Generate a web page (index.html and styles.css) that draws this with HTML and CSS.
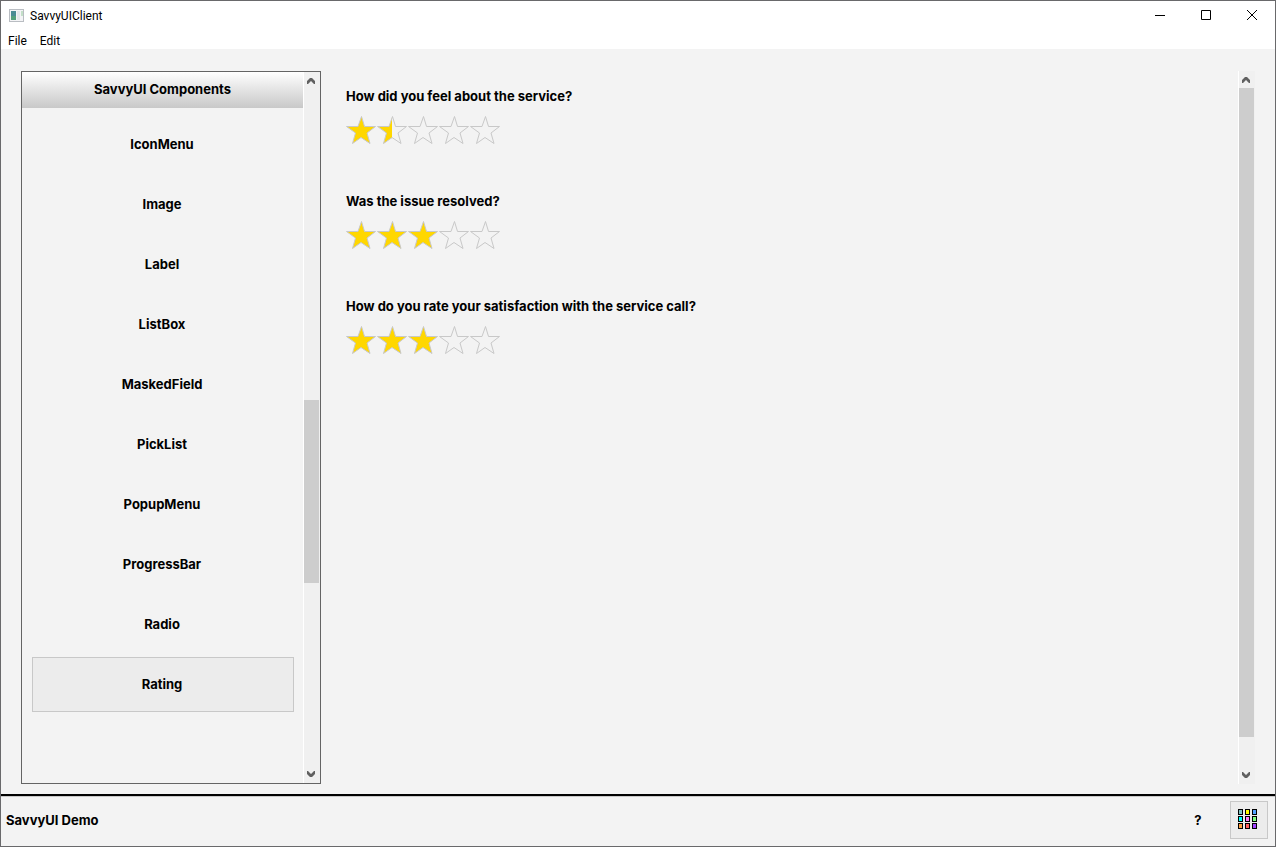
FILE: index.html
```html
<!DOCTYPE html>
<html lang="en">
<head>
  <meta charset="UTF-8" />
  <meta name="viewport" content="width=device-width, initial-scale=1.0"/>
  <title>SavvyUIClient</title>
  <link rel="stylesheet" href="styles.css">
</head>
<body>

  <!-- Shared shapes -->
  <svg class="defs" aria-hidden="true">
    <defs>
      <path id="starShape" d="M15.5 .5L18.5 10.5H29.5L21 17L24 27.5L15 21.5L6.5 27.5L9.5 17L.5 10.5H12Z"/>
      <path id="halfShape" d="M15 2L12 10.5H1L9.5 17L6.5 27.5L15 21.8Z"/>
      <path id="arrowUp" d="M0 4L3 1H5L8 4V7H7L4 4L1 7H0Z"/>
    </defs>
  </svg>

  <header>
    <div class="title-bar">
      <svg class="app-icon" width="15" height="13" viewBox="0 0 15 13" aria-hidden="true">
        <rect x=".5" y=".5" width="14" height="12" fill="#f4f4f6" stroke="#b9bdc2"/>
        <rect x="2" y="2" width="5" height="9" fill="#4b8c94"/>
        <rect x="2" y="7" width="5" height="4" fill="#55a07c"/>
        <rect x="8" y="2" width="3" height="9" fill="#e5e7ea"/>
        <rect x="12" y="2" width="2" height="5" fill="#c3dfc8"/>
      </svg>
      <h1>SavvyUIClient</h1>
      <div class="window-buttons">
        <button type="button" aria-label="Minimize">
          <svg width="10" height="11" viewBox="0 0 10 11"><path d="M0 5.5H10" stroke="#000"/></svg>
        </button>
        <button type="button" aria-label="Maximize">
          <svg width="10" height="11" viewBox="0 0 10 11"><path d="M.5 .5H9.5V9.5H.5Z" fill="none" stroke="#000"/></svg>
        </button>
        <button type="button" aria-label="Close">
          <svg width="10" height="11" viewBox="0 0 10 11"><path d="M0 0L10 10M10 0L0 10" stroke="#000"/></svg>
        </button>
      </div>
    </div>
    <nav class="menu-bar">
      <button type="button">File</button>
      <button type="button">Edit</button>
    </nav>
  </header>

  <main>
    <!-- Component list -->
    <aside class="panel">
      <div class="panel-content">
        <h2>SavvyUI Components</h2>
        <div class="component-list">
          <button type="button">IconMenu</button>
          <button type="button">Image</button>
          <button type="button">Label</button>
          <button type="button">ListBox</button>
          <button type="button">MaskedField</button>
          <button type="button">PickList</button>
          <button type="button">PopupMenu</button>
          <button type="button">ProgressBar</button>
          <button type="button">Radio</button>
          <button type="button" class="selected">Rating</button>
        </div>
      </div>
      <div class="scrollbar list-scroll">
        <button type="button" aria-label="Scroll list up"><svg width="8" height="7"><use href="#arrowUp"/></svg></button>
        <div class="track"><div class="thumb"></div></div>
        <button type="button" class="down" aria-label="Scroll list down"><svg width="8" height="7"><use href="#arrowUp"/></svg></button>
      </div>
    </aside>

    <!-- Rating questions -->
    <section class="ratings">
      <div class="question" role="group" aria-labelledby="q1">
        <h3 id="q1">How did you feel about the service?</h3>
        <div class="stars" data-value="1.5"></div>
      </div>
      <div class="question" role="group" aria-labelledby="q2">
        <h3 id="q2">Was the issue resolved?</h3>
        <div class="stars" data-value="3"></div>
      </div>
      <div class="question" role="group" aria-labelledby="q3">
        <h3 id="q3">How do you rate your satisfaction with the service call?</h3>
        <div class="stars" data-value="3"></div>
      </div>
    </section>

    <div class="scrollbar page-scroll">
      <button type="button" aria-label="Scroll page up"><svg width="8" height="7"><use href="#arrowUp"/></svg></button>
      <div class="track"><div class="thumb"></div></div>
      <button type="button" class="down" aria-label="Scroll page down"><svg width="8" height="7"><use href="#arrowUp"/></svg></button>
    </div>
  </main>

  <footer>
    <span>SavvyUI Demo</span>
    <button type="button" class="help">?</button>
    <button type="button" class="palette" aria-label="Themes">
      <svg width="20" height="20" viewBox="0 0 20 20" stroke="#000">
        <rect x=".5" y=".5" width="4" height="5" fill="#80c0c0"/>
        <rect x="7.5" y=".5" width="4" height="5" fill="#ffff00"/>
        <rect x="14.5" y=".5" width="4" height="5" fill="#50a0ff"/>
        <rect x=".5" y="7.5" width="4" height="5" fill="#00ffff"/>
        <rect x="7.5" y="7.5" width="4" height="5" fill="#ff80ff"/>
        <rect x="14.5" y="7.5" width="4" height="5" fill="#80ff80"/>
        <rect x=".5" y="14.5" width="4" height="5" fill="#ffa040"/>
        <rect x="7.5" y="14.5" width="4" height="5" fill="#ff6060"/>
        <rect x="14.5" y="14.5" width="4" height="5" fill="#a040ff"/>
      </svg>
    </button>
  </footer>

  <script>
    function renderStars(box) {
      const value = parseFloat(box.dataset.value);
      box.innerHTML = "";

      for (let i = 1; i <= 5; i++) {
        let fill = "";
        if (value >= i) {
          fill = `<use href="#starShape" class="fill"/>`;
        } else if (value >= i - 0.5) {
          fill = `<use href="#halfShape" class="fill"/>`;
        }

        const star = document.createElement("button");
        star.type = "button";
        star.setAttribute("aria-label", i + " of 5 stars");
        star.innerHTML = `<svg width="31" height="29" viewBox="0 0 31 29">${fill}<use href="#starShape" class="outline"/></svg>`;
        star.onclick = () => {
          box.dataset.value = i;
          renderStars(box);
        };
        box.appendChild(star);
      }
    }

    document.querySelectorAll(".stars").forEach(renderStars);
  </script>
</body>
</html>
```

FILE: styles.css
```css
* {
  box-sizing: border-box;
}

body {
  margin: 0;
  min-height: 100vh;
  display: flex;
  flex-direction: column;
  border: 1px solid #69696b;
  background-color: #f3f3f3;
  color: #000;
  font-family: Inter, "Liberation Sans", sans-serif;
  font-size: 13px;
  font-weight: bold;
  line-height: 16px;
}

h1, h2, h3 {
  margin: 0;
  font-size: inherit;
}

button {
  padding: 0;
  border: none;
  background: none;
  color: inherit;
  font: inherit;
}

svg {
  display: block;
}

.defs {
  position: absolute;
  width: 0;
  height: 0;
}

header {
  background-color: #fff;
  font-family: Roboto, "Noto Sans", sans-serif;
  font-size: 12px;
  font-weight: normal;
}

.title-bar {
  display: flex;
  align-items: center;
  height: 29px;
  padding-left: 8px;
  gap: 6px;
}

.title-bar h1 {
  font-weight: normal;
}

.window-buttons {
  display: flex;
  margin-left: auto;
}

.window-buttons button {
  display: grid;
  place-items: center;
  width: 46px;
  height: 28px;
}

.menu-bar {
  display: flex;
  gap: 13px;
  height: 19px;
  padding: 3px 0 0 7px;
}

.menu-bar button {
  height: 16px;
}

main {
  flex: 1;
  display: flex;
  padding: 22px 20px 10px;
}

.panel {
  display: flex;
  width: 300px;
  border: 1px solid #646464;
}

.panel-content {
  flex: 1;
}

.panel h2 {
  height: 36px;
  line-height: 35px;
  text-align: center;
  background: linear-gradient(#fff, #c8c8c8);
}

.component-list {
  display: flex;
  flex-direction: column;
  gap: 5px;
  padding: 9px 9px 9px 10px;
}

.component-list button {
  height: 55px;
  padding: 0 2px 2px 0;
  border: 1px solid transparent;
}

.component-list .selected {
  border-color: #c8c8c8;
  background-color: #ececec;
}

.scrollbar {
  display: flex;
  flex-direction: column;
  width: 17px;
  border-left: 1px solid #fff;
  background-color: #f0f0f0;
}

.scrollbar button {
  display: grid;
  place-items: center;
  height: 17px;
  padding-right: 2px;
}

.scrollbar svg {
  fill: #606060;
}

.scrollbar .down svg {
  transform: rotate(180deg);
}

.track {
  flex: 1;
  display: grid;
}

.thumb {
  grid-row: 2;
  margin-right: 1px;
  background-color: #cdcdcd;
}

.list-scroll .track {
  grid-template-rows: 311fr 183fr 183fr;
}

.page-scroll .track {
  grid-template-rows: 0 649fr 30fr;
}

.ratings {
  flex: 1;
  display: flex;
  flex-direction: column;
  gap: 49px;
  padding: 17px 25px;
}

.question h3 {
  margin-bottom: 12px;
}

.question + .question {
  margin-top: -1px;
}

.stars {
  display: flex;
}

.fill {
  fill: #ffd700;
}

.outline {
  fill: none;
  stroke: #c8c8c8;
}

footer {
  display: flex;
  align-items: center;
  height: 52px;
  padding: 0 7px 2px 5px;
  border-top: 2px solid #000;
  box-shadow: inset 0 1px #c8c8c8;
}

.help {
  width: 38px;
  height: 38px;
  margin-left: auto;
  margin-right: 13px;
}

.palette {
  display: grid;
  place-items: center;
  width: 38px;
  height: 38px;
  padding: 0 2px 2px 0;
  border: 1px solid #c8c8c8;
  background-color: #ececec;
}
```
